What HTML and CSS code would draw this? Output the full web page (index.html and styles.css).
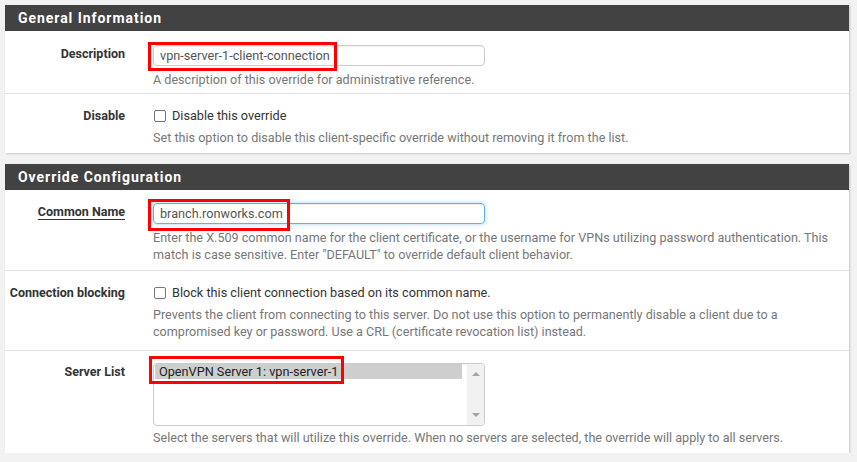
FILE: index.html
```html
<!DOCTYPE html>
<html>
<head>
<meta charset="utf-8">
<link rel="stylesheet" href="styles.css">
</head>
<body>
<div class="page">
  <section class="panel">
    <h2 class="panel-title">General Information</h2>
    <div class="row">
      <div class="label">Description</div>
      <div class="field">
        <div class="control">
          <div class="input">vpn-server-1-client-connection</div>
          <span class="mark mark-desc"></span>
        </div>
        <div class="help">A description of this override for administrative reference.</div>
      </div>
    </div>
    <div class="row row-check">
      <div class="label">Disable</div>
      <div class="field">
        <label class="check"><span class="box"></span>Disable this override</label>
        <div class="help">Set this option to disable this client-specific override without removing it from the list.</div>
      </div>
    </div>
  </section>

  <section class="panel">
    <h2 class="panel-title">Override Configuration</h2>
    <div class="row row-two">
      <div class="label"><span class="req">Common Name</span></div>
      <div class="field">
        <div class="control">
          <div class="input input-focus">branch.ronworks.com</div>
          <span class="mark mark-cn"></span>
        </div>
        <div class="help">Enter the X.509 common name for the client certificate, or the username for VPNs utilizing password authentication. This match is case sensitive. Enter "DEFAULT" to override default client behavior.</div>
      </div>
    </div>
    <div class="row row-check row-block">
      <div class="label">Connection blocking</div>
      <div class="field">
        <label class="check"><span class="box"></span>Block this client connection based on its common name.</label>
        <div class="help">Prevents the client from connecting to this server. Do not use this option to permanently disable a client due to a compromised key or password. Use a CRL (certificate revocation list) instead.</div>
      </div>
    </div>
    <div class="row row-list">
      <div class="label">Server List</div>
      <div class="field">
        <div class="control">
          <div class="listbox">
            <div class="options">
              <div class="option selected">OpenVPN Server 1: vpn-server-1</div>
            </div>
            <div class="scrollbar">
              <span class="arrow arrow-up"></span>
              <span class="arrow arrow-down"></span>
            </div>
          </div>
          <span class="mark mark-list"></span>
        </div>
        <div class="help help-list">Select the servers that will utilize this override. When no servers are selected, the override will apply to all servers.</div>
      </div>
    </div>
  </section>
</div>
</body>
</html>
```
FILE: styles.css
```css
* { box-sizing: border-box; }
html, body { margin: 0; padding: 0; }
body {
  background: #f2f2f2;
  font-family: Roboto, "Liberation Sans", sans-serif;
  font-size: 12.7px;
  color: #333;
}
.page {
  padding: 5px 8px 0 5px;
  display: flex;
  flex-direction: column;
  gap: 11px;
}
.panel {
  background: #fff;
  box-shadow: 1px 1px 2px rgba(0,0,0,0.18);
}
.panel-title {
  margin: 0;
  height: 26px;
  background: #424242;
  color: #fff;
  font-size: 14px;
  font-weight: 700;
  letter-spacing: 0.95px;
  line-height: 26px;
  padding-left: 13px;
}
.row {
  display: grid;
  grid-template-columns: 138px 1fr;
  padding: 14px 15px 5px 0;
  border-top: 1px solid #e2e2e2;
}
.panel-title + .row { border-top: 0; }
.row-two { padding-top: 13px; padding-bottom: 7px; }
.row-check { padding-top: 13px; padding-bottom: 7px; }
.row-block { padding-bottom: 10px; }
.row-list { padding-top: 12px; padding-bottom: 7px; }
.label {
  text-align: right;
  padding-right: 18px;
  font-size: 12.5px;
  font-weight: 700;
  line-height: 17px;
  color: #333;
}
.req {
  text-decoration: underline;
  text-underline-offset: 3px;
}
.field { padding-left: 10px; }
.control {
  position: relative;
  width: 332px;
}
.input {
  height: 21px;
  border: 1px solid #ccc;
  border-radius: 4px;
  padding: 0 6px;
  line-height: 19px;
  color: #555;
  box-shadow: inset 0 1px 1px rgba(0,0,0,0.06);
}
.input-focus {
  border-color: #66afe9;
  box-shadow: inset 0 1px 1px rgba(0,0,0,0.06), 0 0 4px rgba(102,175,233,0.6);
}
.help {
  margin-top: 5px;
  font-size: 12.6px;
  line-height: 17px;
  color: #777;
}
.help-list { margin-top: 3px; }
.check {
  display: flex;
  align-items: center;
  line-height: 17px;
  color: #333;
  padding-left: 1px;
}
.box {
  width: 12px;
  height: 12px;
  border: 1px solid #767676;
  border-radius: 2px;
  margin-right: 6px;
  background: #fff;
}
.listbox {
  height: 63px;
  border: 1px solid #ccc;
  border-radius: 4px;
  display: flex;
  overflow: hidden;
  box-shadow: inset 0 1px 1px rgba(0,0,0,0.06);
}
.options {
  flex: 1;
  padding: 0 0 0 1px;
}
.option {
  height: 15px;
  line-height: 15px;
  padding-left: 4px;
  color: #222;
}
.option.selected { background: #cecece; margin-right: 5px; }
.scrollbar {
  width: 17px;
  background: #f1f1f1;
  position: relative;
}
.arrow {
  position: absolute;
  left: 5px;
  width: 0;
  height: 0;
  border-left: 4px solid transparent;
  border-right: 4px solid transparent;
}
.arrow-up { top: 8px; border-bottom: 4px solid #a3a3a3; }
.arrow-down { bottom: 8px; border-top: 4px solid #a3a3a3; }
.mark {
  position: absolute;
  border: 3px solid #f00;
  pointer-events: none;
}
.mark-desc { left: -5px; top: -3px; width: 189px; height: 29px; }
.mark-cn { left: -5px; top: -4px; width: 142px; height: 32px; }
.mark-list { left: -4px; top: -7px; width: 195px; height: 28px; }
```
